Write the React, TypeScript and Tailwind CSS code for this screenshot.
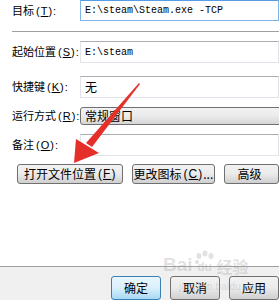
const CJK = { fontFamily: '"Noto Sans CJK SC", "Liberation Sans", sans-serif' };
const MONO = { fontFamily: '"Liberation Mono", "DejaVu Sans Mono", monospace' };
const LATIN = { fontFamily: '"Liberation Sans", sans-serif' };

// "(K):" accelerator hint, the letter is underlined like a Windows dialog
function Accel({ k, colon }: { k: string; colon?: boolean }) {
  return (
    <span className="ml-[2px] tracking-[1px]" style={LATIN}>
      (<span className="underline">{k}</span>){colon ? ":" : ""}
    </span>
  );
}

function Label({ text, keyChar }: { text: string; keyChar: string }) {
  return (
    <div className="w-[80px] shrink-0 pl-[12px] text-[11px] leading-none text-black whitespace-nowrap" style={CJK}>
      {text}
      <Accel k={keyChar} colon />
    </div>
  );
}

function Field({ value, mono, focused }: { value?: string; mono?: boolean; focused?: boolean }) {
  return (
    <div
      className={
        "flex-1 h-full flex items-center pl-[4px] bg-white border whitespace-nowrap overflow-hidden " +
        (focused ? "border-[#7eb4ea] border-t-[#569de5]" : "border-[#e2e3ea] border-t-[#abadb3]")
      }
    >
      {value && (
        <span className={mono ? "text-[10px] text-black" : "text-[12px] text-black"} style={mono ? MONO : CJK}>
          {value}
        </span>
      )}
    </div>
  );
}

function WinButton({ children, className = "", primary }: { children: React.ReactNode; className?: string; primary?: boolean }) {
  return (
    <div
      className={
        "h-full flex items-center justify-center rounded-[3px] border text-[12px] text-black whitespace-nowrap " +
        (primary
          ? "border-[#3c7fb1] bg-gradient-to-b from-[#eaf6fd] via-[#d9f0fc] to-[#a7d9f5] "
          : "border-[#707070] bg-gradient-to-b from-[#f2f2f2] via-[#ebebeb] to-[#cfcfcf] ") +
        className
      }
      style={CJK}
    >
      {children}
    </div>
  );
}

export default function App() {
  return (
    <div className="relative w-[279px] h-[300px] overflow-hidden bg-white">
      <div className="flex flex-col h-[266px]">
        <div className="flex items-center h-[21px]">
          <Label text="目标" keyChar="T" />
          <Field value="E:\steam\Steam.exe -TCP" mono focused />
        </div>
        <div className="ml-[12px] mt-[10px] h-px bg-[#a0a0a0]" />
        <div className="flex items-center h-[22px] mt-[9px]">
          <Label text="起始位置" keyChar="S" />
          <Field value="E:\steam" mono />
        </div>
        <div className="flex items-center h-[22px] mt-[13px]">
          <Label text="快捷键" keyChar="K" />
          <Field value="无" />
        </div>
        <div className="flex items-center h-[18px] mt-[9px]">
          <Label text="运行方式" keyChar="R" />
          <div
            className="flex-1 h-full flex items-center pl-[4px] -mr-[4px] rounded-[3px] border border-[#707070] bg-gradient-to-b from-[#f2f2f2] via-[#ebebeb] to-[#d6d6d6] text-[12px] text-black"
            style={CJK}
          >
            常规窗口
          </div>
        </div>
        <div className="flex items-center h-[22px] mt-[9px]">
          <Label text="备注" keyChar="O" />
          <Field />
        </div>
        <div className="flex h-[20px] mt-[8px] pl-[17px] gap-[9px]">
          <WinButton className="w-[118px]">
            打开文件位置
            <Accel k="F" />
          </WinButton>
          <WinButton className="w-[91px]">
            更改图标
            <Accel k="C" />
            ...
          </WinButton>
          <WinButton className="w-[60px] justify-start pl-[13px]">高级</WinButton>
        </div>
      </div>
      <div className="h-px bg-[#a0a0a0]" />
      <div className="h-[33px] bg-[#f0f0f0] flex items-start pt-[9px] pl-[111px] gap-[9px]">
        <WinButton primary className="w-[73px] h-[19px]">确定</WinButton>
        <WinButton className="w-[73px] h-[19px]">取消</WinButton>
        <WinButton className="w-[73px] h-[19px]">应用</WinButton>
      </div>

      {/* baidu watermark, sits over the bottom buttons */}
      <div className="absolute left-[163px] top-[250px] pointer-events-none text-[rgba(150,150,150,0.28)]">
        <div className="flex items-end text-[19px] font-bold leading-none" style={LATIN}>
          Bai
          <span className="relative w-[22px] h-[24px] mx-[1px] flex items-end justify-center text-[12px] leading-none pb-[1px]">
            <svg width="22" height="14" viewBox="0 0 22 14" className="absolute left-0 top-0">
              <g fill="rgba(150,150,150,0.28)">
                <ellipse cx="5" cy="6" rx="2.5" ry="3" />
                <ellipse cx="11" cy="3.5" rx="2.5" ry="3" />
                <ellipse cx="17" cy="6" rx="2.5" ry="3" />
                <ellipse cx="3" cy="12" rx="2" ry="2" />
              </g>
            </svg>
            du
          </span>
          <span style={CJK} className="text-[16px]">经验</span>
        </div>
        <div className="text-[10px] leading-none mt-[8px] ml-[16px] tracking-wide" style={LATIN}>
          jingyan.baidu.com
        </div>
      </div>

      {/* red arrow pointing at the open-location button */}
      <svg className="absolute left-0 top-0 pointer-events-none" width="279" height="300" viewBox="0 0 279 300">
        <polygon points="139,83 140,84 92,147 86,143" fill="#e5302a" />
        <polygon points="74,163 76,139 99,153" fill="#e5302a" />
      </svg>
    </div>
  );
}
